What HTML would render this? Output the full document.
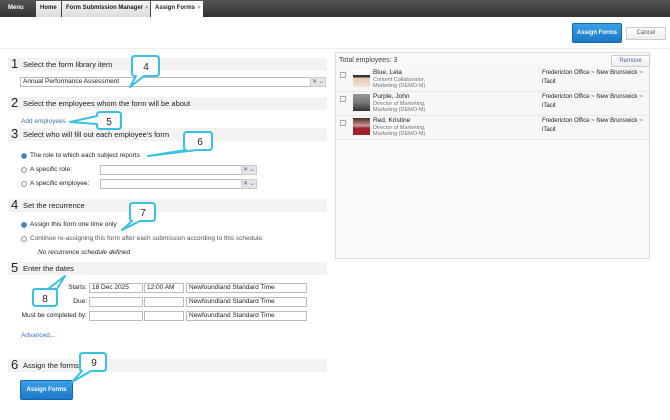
<!DOCTYPE html>
<html><head><meta charset="utf-8"><style>
*{margin:0;padding:0;box-sizing:border-box}
body{width:670px;height:420px;position:relative;background:#fff;font-family:"Liberation Sans",sans-serif;font-size:7px;color:#222;overflow:hidden}
.a{position:absolute;white-space:nowrap}
.top{left:0;top:0;width:670px;height:17px;background:linear-gradient(#555,#333)}
.tab{top:1px;height:16px;background:linear-gradient(#f4f4f4,#ddd);font-weight:bold;font-size:6px;line-height:15px;padding-left:4px;color:#222;overflow:hidden}
.hdr{left:8px;width:319px;height:13px;background:#f2f2f2;font-size:7.5px;line-height:13px;padding-left:15px;color:#222}
.hdr b{position:absolute;left:3px;top:-1px;font-size:13px;font-weight:normal}
.inp{height:10px;border:1px solid #bbb;background:#fff;font-size:6.5px;line-height:8px;padding-left:2px}
.dd{width:16px;height:10px;background:#e4e4e4;border:1px solid #ccc;font-size:6px;line-height:8px;text-align:center;color:#46a}
.rad{width:6px;height:6px;border-radius:50%;border:1px solid #999;background:#eee}
.rad.on{background:#4a7fb8;border-color:#6b8fb8}
.lnk{color:#3b6fa8}
.btn{background:linear-gradient(#3ba0e6,#1a78c8);color:#fff;font-weight:bold;text-align:center;border-radius:2px;border:1px solid #1667aa}
.row{left:336px;width:313px;height:24px;border-bottom:1px solid #e8e8e8;background:#f7f7f7}
.cb{left:4px;top:4px;width:6px;height:6px;border:1px solid #aaa;background:#fff}
.ph{left:17px;top:2px;width:17px;height:17px}
.nm{left:37px;top:1px;font-size:6.5px;color:#222}
.sub{left:37px;top:9px;font-size:5.5px;color:#777;line-height:6px}
.loc{left:206px;top:1px;font-size:6px;line-height:9px;color:#222}
</style></head><body>
<div class="a top"></div>
<div class="a" style="left:0;top:0;width:35px;height:17px;color:#fff;font-weight:bold;font-size:6px;line-height:17px;padding-left:8px">Menu</div>
<div class="a tab" style="left:36px;width:25px">Home</div>
<div class="a tab" style="left:62px;width:88px">Form Submission Manager <span style="color:#999;font-size:5px;vertical-align:top">✕</span></div>
<div class="a tab" style="left:151px;width:52px;background:#fff;height:17px">Assign Forms <span style="color:#999;font-size:5px;vertical-align:top">✕</span></div>

<div class="a btn" style="left:572px;top:23px;width:50px;height:20px;font-size:6px;line-height:18px">Assign Forms</div>
<div class="a" style="left:626px;top:27px;width:40px;height:13px;border:1px solid #ccc;background:linear-gradient(#fff,#eee);font-size:6px;line-height:11px;text-align:center;color:#555">Cancel</div>
<div class="a" style="left:0;top:48px;width:670px;height:1px;background:#eee"></div>

<div class="a hdr" style="top:58px"><b>1</b>Select the form library item</div>
<div class="a inp" style="left:20px;top:77px;width:291px">Annual Performance Assessment</div>
<div class="a dd" style="left:310px;top:77px">✕ ⌄</div>

<div class="a hdr" style="top:97px"><b>2</b>Select the employees whom the form will be about</div>
<div class="a lnk" style="left:21px;top:118px;font-size:6.5px">Add employees</div>

<div class="a hdr" style="top:128px"><b>3</b>Select who will fill out each employee's form</div>
<div class="a rad on" style="left:21px;top:153px"></div><div class="a" style="left:30px;top:152px;font-size:6.5px">The role to which each subject reports</div>
<div class="a rad" style="left:21px;top:167px"></div><div class="a" style="left:30px;top:166px;font-size:6.5px">A specific role:</div>
<div class="a inp" style="left:100px;top:165px;width:142px"></div><div class="a dd" style="left:241px;top:165px">✕ ⌄</div>
<div class="a rad" style="left:21px;top:181px"></div><div class="a" style="left:30px;top:180px;font-size:6.5px">A specific employee:</div>
<div class="a inp" style="left:100px;top:179px;width:142px"></div><div class="a dd" style="left:241px;top:179px">✕ ⌄</div>

<div class="a hdr" style="top:199px"><b>4</b>Set the recurrence</div>
<div class="a rad on" style="left:21px;top:222px"></div><div class="a" style="left:30px;top:221px;font-size:6.5px">Assign this form one time only</div>
<div class="a rad" style="left:21px;top:236px"></div><div class="a" style="left:30px;top:235px;font-size:6.5px;color:#555">Continue re-assigning this form after each submission according to this schedule:</div>
<div class="a" style="left:38px;top:249px;font-size:6.5px;font-style:italic">No recurrence schedule defined</div>

<div class="a hdr" style="top:262px"><b>5</b>Enter the dates</div>
<div class="a" style="left:60px;top:284px;width:27px;text-align:right;font-size:6.5px">Starts:</div>
<div class="a" style="left:40px;top:298px;width:47px;text-align:right;font-size:6.5px">Due:</div>
<div class="a" style="left:10px;top:312px;width:77px;text-align:right;font-size:6.5px">Must be completed by:</div>
<div class="a inp" style="left:89px;top:283px;width:54px">18 Dec 2025</div>
<div class="a inp" style="left:89px;top:297px;width:54px"></div>
<div class="a inp" style="left:89px;top:311px;width:54px"></div>
<div class="a inp" style="left:144px;top:283px;width:40px">12:00 AM</div>
<div class="a inp" style="left:144px;top:297px;width:40px"></div>
<div class="a inp" style="left:144px;top:311px;width:40px"></div>
<div class="a inp" style="left:186px;top:283px;width:121px">Newfoundland Standard Time</div>
<div class="a inp" style="left:186px;top:297px;width:121px">Newfoundland Standard Time</div>
<div class="a inp" style="left:186px;top:311px;width:121px">Newfoundland Standard Time</div>
<div class="a lnk" style="left:21px;top:332px;font-size:6.5px">Advanced...</div>

<div class="a hdr" style="top:359px"><b>6</b>Assign the forms</div>
<div class="a btn" style="left:20px;top:380px;width:53px;height:20px;font-size:6px;line-height:18px">Assign Forms</div>

<div class="a" style="left:335px;top:52px;width:315px;height:207px;border:1px solid #ddd;background:#f9f9f9"></div>
<div class="a" style="left:339px;top:57px;font-size:7px;color:#444">Total employees: 3</div>
<div class="a" style="left:611px;top:55px;width:39px;height:12px;border:1px solid #ccc;background:linear-gradient(#fff,#eee);font-size:6px;line-height:10px;text-align:center;color:#46a">Remove</div>
<div class="a row" style="top:68px"><div class="a cb"></div><div class="a ph" style="background:linear-gradient(#fff 30%,#333 30%,#333 45%,#e8c8b0 45%,#f3e3d6)"></div><div class="a nm">Blue, Leia</div><div class="a sub">Content Collaborator,<br>Marketing (DEMO-M)</div><div class="a loc">Fredericton Office ~ New Brunswick ~<br>iTacit</div></div>
<div class="a row" style="top:92px"><div class="a cb"></div><div class="a ph" style="background:linear-gradient(#999,#777 50%,#333)"></div><div class="a nm">Purple, John</div><div class="a sub">Director of Marketing,<br>Marketing (DEMO-M)</div><div class="a loc">Fredericton Office ~ New Brunswick ~<br>iTacit</div></div>
<div class="a row" style="top:116px"><div class="a cb"></div><div class="a ph" style="background:linear-gradient(#4a2a20,#c99 45%,#a02030 60%)"></div><div class="a nm">Red, Kristine</div><div class="a sub">Director of Marketing,<br>Marketing (DEMO-M)</div><div class="a loc">Fredericton Office ~ New Brunswick ~<br>iTacit</div></div>

<svg class="a" style="left:0;top:0" width="670" height="420">
<g fill="#fff" stroke="#3cc0e0" stroke-width="2" stroke-linejoin="round">
<path d="M137 56h19q3 0 3 3v14q0 3-3 3h-12l-14 11l6-11h-1q-3 0-3-3v-14q0-3 3-3z"/>
<path d="M100 112h18q3 0 3 3v11q0 3-3 3h-18q-3 0-3-3v-2l-27 -2l27-6v-1q0-3 3-3z"/>
<path d="M190 132h19q3 0 3 3v12q0 3-3 3h-12l-49 6l38-6q-2 0-2-3v-12q0-3 3-3z"/>
<path d="M134 203h18q3 0 3 3v12q0 3-3 3h-12l-18 9l10-9q-2 0-2-3v-12q0-3 3-3z"/>
<path d="M36 289h18q3 0 3 3v11q0 3-3 3h-18q-3 0-3-3v-11q0-3 3-3h12l17-13l-8 13z"/>
<path d="M85 353h18q3 0 3 3v12q0 3-3 3h-12l-19 11l10-11h0q-2 0-2-3v-12q0-3 3-3z"/>
</g>
<g fill="#222" font-family="Liberation Sans" font-size="10" text-anchor="middle">
<text x="146" y="70">4</text><text x="109" y="125">5</text><text x="200" y="145">6</text><text x="143" y="216">7</text><text x="45" y="302">8</text><text x="94" y="366">9</text>
</g>
</svg>
</body></html>
